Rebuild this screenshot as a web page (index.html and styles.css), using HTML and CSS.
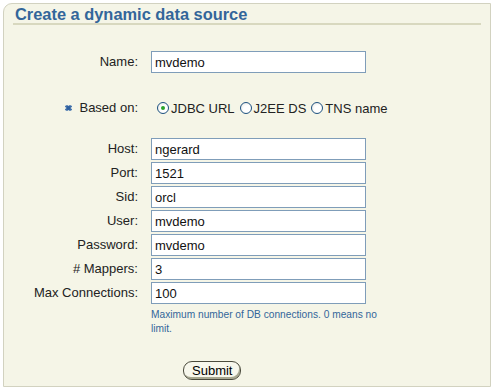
FILE: index.html
```html
<!DOCTYPE html>
<html>
<head>
<meta charset="utf-8">
<link rel="stylesheet" href="styles.css">
</head>
<body>
<div class="panel">
  <h1 class="title">Create a dynamic data source</h1>
  <form class="form">
    <label class="lbl">Name:</label>
    <div class="ctl"><input class="field" type="text" value="mvdemo"></div>

    <label class="lbl based">
      <svg class="req" width="7" height="6" viewBox="0 0 7 6"><path d="M0 1.5h7M0 4.5h7M2 0v6M5 0v6" stroke="#4a78b0" stroke-width="1.4"/><rect x="1.5" y="1.2" width="4" height="3.6" fill="#2d5f9e"/></svg>
      Based on:</label>
    <div class="ctl radios based">
      <span class="opt"><span class="radio on"></span>JDBC URL</span>
      <span class="opt"><span class="radio"></span>J2EE DS</span>
      <span class="opt"><span class="radio"></span>TNS name</span>
    </div>

    <label class="lbl first">Host:</label>
    <div class="ctl first"><input class="field" type="text" value="ngerard"></div>
    <label class="lbl">Port:</label>
    <div class="ctl"><input class="field" type="text" value="1521"></div>
    <label class="lbl">Sid:</label>
    <div class="ctl"><input class="field" type="text" value="orcl"></div>
    <label class="lbl">User:</label>
    <div class="ctl"><input class="field" type="text" value="mvdemo"></div>
    <label class="lbl">Password:</label>
    <div class="ctl"><input class="field" type="text" value="mvdemo"></div>
    <label class="lbl"># Mappers:</label>
    <div class="ctl"><input class="field" type="text" value="3"></div>
    <label class="lbl">Max Connections:</label>
    <div class="ctl"><input class="field" type="text" value="100"></div>
    <div class="help">Maximum number of DB connections. 0 means no limit.</div>

    <div class="actions"><button class="btn" type="button">Submit</button></div>
  </form>
</div>
</body>
</html>
```
FILE: styles.css
```css
html, body {
  margin: 0;
  padding: 0;
  background: #ffffff;
}
body {
  font-family: "Liberation Sans", Arial, sans-serif;
  font-size: 13px;
  color: #222;
}
.panel {
  box-sizing: border-box;
  margin: 3px 0 0 3px;
  width: 488px;
  height: 384px;
  border: 1px solid #d2d2c0;
  border-top-left-radius: 9px;
  background: #f5f5e7;
}
.title {
  margin: 0 9px;
  padding: 2px 0 0 2px;
  font-size: 16.4px;
  line-height: 17px;
  font-weight: bold;
  color: #33669a;
  border-bottom: 2px solid #d8d8bf;
}
.form {
  display: grid;
  grid-template-columns: 134px 1fr;
  column-gap: 13px;
  row-gap: 2px;
  margin-top: 26px;
}
.lbl {
  text-align: right;
  line-height: 22px;
  height: 22px;
  white-space: nowrap;
}
.ctl {
  height: 22px;
  display: flex;
  align-items: center;
}
.based {
  margin-top: 22px;
}
.first {
  margin-top: 17px;
}
.req {
  display: inline-block;
  vertical-align: middle;
  margin-right: 4px;
  position: relative;
  top: -1px;
}
.field {
  box-sizing: border-box;
  width: 215px;
  height: 22px;
  margin: 0;
  border: 1px solid #7f9db9;
  padding: 0 3px;
  font-family: "Liberation Sans", Arial, sans-serif;
  font-size: 13px;
  color: #111;
  background: #fff;
}
.radios {
  padding-left: 6px;
  gap: 5px;
}
.opt {
  display: inline-flex;
  align-items: center;
  white-space: nowrap;
}
.radio {
  box-sizing: border-box;
  width: 12px;
  height: 12px;
  border: 1px solid #1c5180;
  border-radius: 50%;
  background: radial-gradient(circle at 60% 60%, #ffffff 40%, #e2e2dc 100%);
  margin-right: 2px;
  display: inline-flex;
  align-items: center;
  justify-content: center;
}
.radio.on::after {
  content: "";
  width: 4px;
  height: 4px;
  border-radius: 50%;
  background: #2aa32a;
}
.help {
  grid-column: 2;
  width: 240px;
  margin-top: 2px;
  font-size: 10.2px;
  line-height: 14px;
  color: #33669a;
}
.actions {
  grid-column: 2;
  margin-top: 23px;
  padding-left: 32px;
}
.btn {
  height: 19px;
  padding: 0 8px;
  border: 1px solid #4a4a3c;
  border-radius: 9px;
  background: #f7f7ec;
  box-shadow: inset -1px -2px 0 #a8a890;
  font-family: "Liberation Sans", Arial, sans-serif;
  font-size: 13px;
  line-height: 16px;
  color: #000;
}
```
